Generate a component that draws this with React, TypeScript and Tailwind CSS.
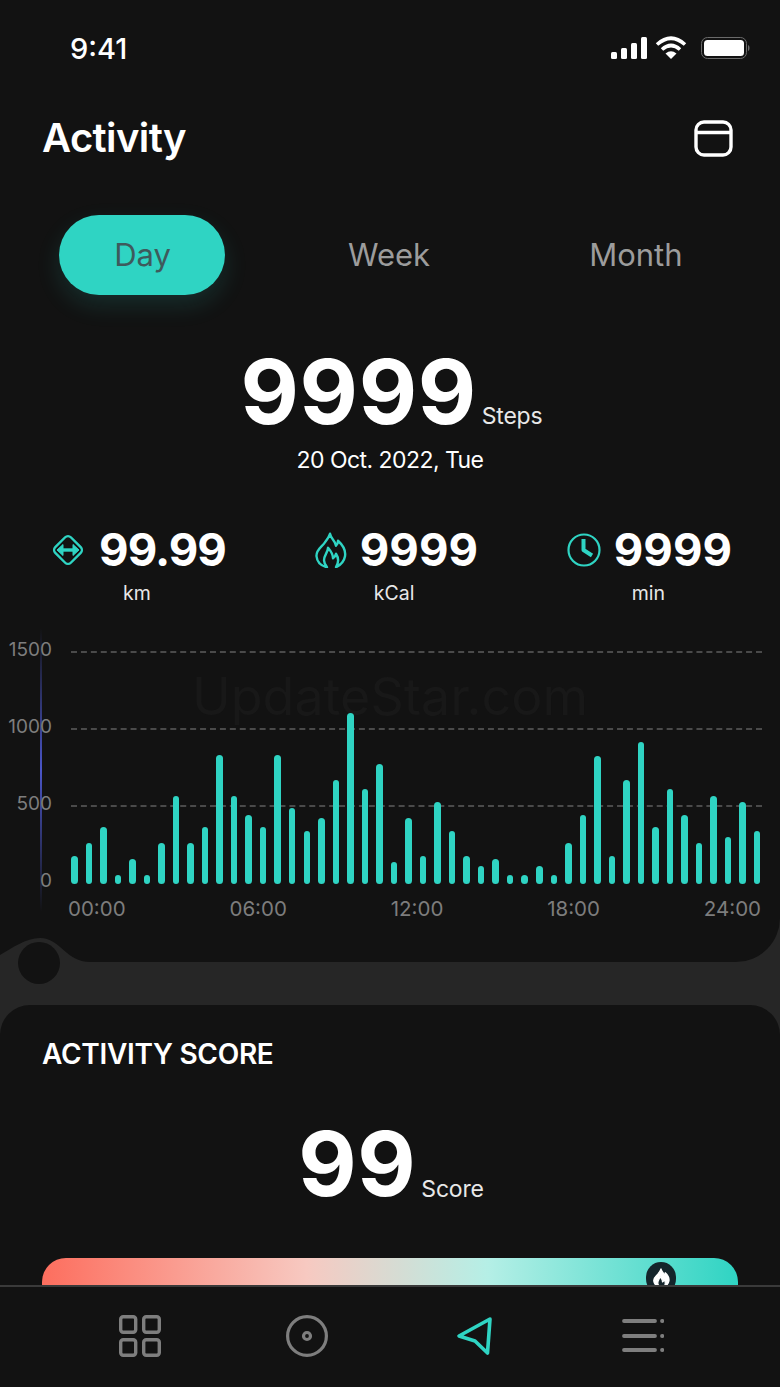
const TEAL = "#2fd4c3";

const BARS = [
  28, 41, 57, 9, 25, 9, 41, 88, 41, 57, 129, 88, 69, 57, 129, 76, 53, 66, 104, 171, 95, 120,
  22, 66, 28, 82, 53, 28, 18, 25, 9, 9, 18, 9, 41, 69, 128, 28, 104, 142, 57, 95, 69, 41, 88, 47, 82, 53,
];

function StatusBar() {
  return (
    <div className="flex h-[96px] shrink-0 items-start justify-between pl-[70px] pr-[30px] pt-[31px]">
      <span className="text-[29px] font-medium leading-[36px] text-white">9:41</span>
      <svg width="140" height="26" viewBox="0 0 140 26" className="mt-[4px]">
        <rect x="1" y="17" width="6" height="7" rx="1.5" fill="#fff" />
        <rect x="11" y="13" width="6" height="11" rx="1.5" fill="#fff" />
        <rect x="21" y="8" width="6" height="16" rx="1.5" fill="#fff" />
        <rect x="31" y="2" width="6" height="22" rx="1.5" fill="#fff" />
        <path d="M47 9.5 Q61 -3 75 9.5" stroke="#fff" strokeWidth="3.6" fill="none" />
        <path d="M52 14.5 Q61 6.5 70 14.5" stroke="#fff" strokeWidth="3.6" fill="none" />
        <path d="M55.5 18.5 Q61 14 66.5 18.5 L61 24 Z" fill="#fff" />
        <rect x="91.5" y="2.5" width="45" height="21" rx="6" stroke="#6b6b6b" fill="none" />
        <rect x="94" y="5" width="40" height="16" rx="3.5" fill="#fff" />
        <path d="M138 10 C140 10.5 140 15.5 138 16 Z" fill="#6b6b6b" />
      </svg>
    </div>
  );
}

function Header() {
  return (
    <div className="flex h-[84px] shrink-0 items-center justify-between pl-[42px] pr-[47px]">
      <h1 className="text-[40px] font-semibold leading-[48px] tracking-[-0.6px] text-white">Activity</h1>
      <svg width="39" height="37" viewBox="0 0 39 37" fill="none" stroke="#fff" strokeWidth="3.4">
        <rect x="2" y="2" width="35" height="33" rx="8" />
        <path d="M2 12.5 H37" />
      </svg>
    </div>
  );
}

function Tabs() {
  return (
    <div className="mt-[35px] flex h-[80px] shrink-0 items-center pl-[59px]">
      <div className="flex h-[80px] w-[166px] items-center justify-center rounded-[40px] bg-[#2fd4c3] pl-[1px] text-[31px] font-normal text-[#3e5a5c] shadow-[0_10px_24px_rgba(47,212,195,0.14)]">
        Day
      </div>
      <div className="ml-[123px] text-[31px] text-[#9c9c9c]">Week</div>
      <div className="ml-[159px] text-[31px] text-[#9c9c9c]">Month</div>
    </div>
  );
}

function Hero() {
  return (
    <div className="flex h-[230px] shrink-0 flex-col items-center pt-[51px]">
      <div className="flex items-end pl-[3px]">
        <span className="text-[90px] font-bold leading-[92px] tracking-[0.6px] text-white">9999</span>
        <span className="mb-[7px] ml-[5px] text-[23px] leading-[30px] tracking-[-0.2px] text-[#e8e8e8]">Steps</span>
      </div>
      <div className="mt-[7px] text-[23px] leading-[30px] tracking-[-0.55px] text-white">20 Oct. 2022, Tue</div>
    </div>
  );
}

function DistanceIcon() {
  return (
    <svg width="36" height="36" viewBox="0 0 36 36" fill="none" stroke={TEAL}>
      <rect x="7" y="7" width="22" height="22" rx="4" strokeWidth="2.4" transform="rotate(45 18 18)" />
      <path d="M11 18 H25" strokeWidth="3.4" />
      <path d="M7 18 L13 12.5 V23.5 Z M29 18 L23 12.5 V23.5 Z" fill={TEAL} strokeWidth="1" strokeLinejoin="round" />
    </svg>
  );
}

function FlameIcon({ color = TEAL, size = 32, filled = false }: { color?: string; size?: number; filled?: boolean }) {
  return (
    <svg width={size} height={size * 1.14} viewBox="0 0 32 36" fill={filled ? color : "none"} stroke={color} strokeWidth="2.4" strokeLinejoin="round">
      <path d="M15 1.5 C16 7 20 7.5 21 13.5 C22.5 12 23 10.5 23 8.5 C28 13 31 18 30 24 C29 30 25 33 21 35 C24 30 24 26 21 21.5 C20.5 24 19.5 25 18 26 C18 21 15.5 18.5 13 15.5 C13 20 9 23 9 28 C9 31 10.5 33 12 35 C6 33.5 2 29.5 1.5 24 C1 17 8 14 10 10 C12 7.5 14 5 15 1.5 Z" />
    </svg>
  );
}

function ClockIcon() {
  return (
    <svg width="34" height="34" viewBox="0 0 34 34" fill="none" stroke={TEAL}>
      <circle cx="17" cy="17" r="15.5" strokeWidth="2.2" />
      <path d="M16.5 6 V17 L25 22.5" strokeWidth="4" strokeLinejoin="round" />
    </svg>
  );
}

function Stat({ icon, value, unit, valueClass, unitClass }: { icon: React.ReactNode; value: string; unit: string; valueClass: string; unitClass: string }) {
  return (
    <div className="flex flex-col">
      <div className="flex h-[50px] items-center gap-[13px]">
        {icon}
        <span className={`text-[45.5px] font-bold leading-[50px] text-white ${valueClass}`}>{value}</span>
      </div>
      <div className={`mt-[4px] text-[19.5px] leading-[28px] text-[#e8e8e8] ${unitClass}`}>{unit}</div>
    </div>
  );
}

function Stats() {
  return (
    <div className="flex h-[109px] shrink-0 items-start justify-between pl-[50px] pr-[48px]">
      <Stat icon={<DistanceIcon />} value="99.99" unit="km" valueClass="tracking-[-0.9px]" unitClass="pl-[73px]" />
      <Stat icon={<FlameIcon />} value="9999" unit="kCal" valueClass="" unitClass="pl-[59px]" />
      <Stat icon={<ClockIcon />} value="9999" unit="min" valueClass="" unitClass="pl-[65px]" />
    </div>
  );
}

function GridRow({ label }: { label: string }) {
  return (
    <div className="flex h-[77px] items-start">
      <span className="mt-[1px] w-[52px] text-right text-[19px] leading-[24px] text-[#7d7d7d]">{label}</span>
      <div className="ml-[19px] mt-[14px] w-[691px] border-t-2 border-dashed border-[#4a4a4a]" />
    </div>
  );
}

function Chart() {
  return (
    <div className="relative h-[328px] shrink-0">
      <div className="absolute left-[40px] top-[-6px] h-[284px] w-[2px] bg-gradient-to-b from-[#12121200] via-[#4a55c8] to-[#12121200]" />
      <div className="absolute left-0 right-0 top-[30px] text-center text-[52px] leading-[66px] text-[#181818]">UpdateStar.com</div>
      <div className="relative pt-[3px]">
        <GridRow label="1500" />
        <GridRow label="1000" />
        <GridRow label="500" />
        <div className="flex h-[24px] items-start">
          <span className="mt-[1px] w-[52px] text-right text-[19px] leading-[24px] text-[#7d7d7d]">0</span>
        </div>
      </div>
      <div className="absolute left-[71px] top-[56px] flex h-[194px] w-[690px] items-end justify-between">
        {BARS.map((h, i) => (
          <div key={i} className="w-[6.5px] rounded-full bg-[#2fd4c3]" style={{ height: h }} />
        ))}
      </div>
      <div className="absolute left-[68px] top-[250px] flex w-[693px] justify-between pt-[11px] text-[20.5px] leading-[28px] text-[#7d7d7d]">
        <span>00:00</span>
        <span>06:00</span>
        <span>12:00</span>
        <span>18:00</span>
        <span>24:00</span>
      </div>
    </div>
  );
}

function Divider() {
  return (
    <div className="relative h-[43px] shrink-0 bg-[#262626]">
      <svg width="90" height="50" viewBox="0 0 90 50" className="absolute left-0 top-[-24px]">
        <path d="M0 17 C12 10 26 0 40 0 C60 0 66 24 90 24 L90 50 L0 50 Z" fill="#262626" />
        <circle cx="39" cy="25" r="21" fill="#121212" />
      </svg>
    </div>
  );
}

function Score() {
  return (
    <div className="flex-1 rounded-t-[30px] bg-[#121212] px-[42px] pt-[32px]">
      <div className="text-[28px] font-semibold leading-[34px] tracking-[-0.3px] text-white">ACTIVITY SCORE</div>
      <div className="mt-[47px] flex items-end justify-center pl-[2px]">
        <span className="text-[90px] font-bold leading-[92px] tracking-[0.6px] text-white">99</span>
        <span className="mb-[6px] ml-[5px] text-[23px] leading-[30px] tracking-[-0.2px] text-[#e8e8e8]">Score</span>
      </div>
      <div className="relative mt-[48px] h-[60px] rounded-[24px] bg-[linear-gradient(90deg,#fd6e5e_0%,#f7c9c1_38%,#b5efe6_64%,#2fd4c3_100%)]">
        <div className="absolute left-[604px] top-[4px] flex h-[32px] w-[30px] items-center justify-center rounded-full bg-[#14252b]">
          <FlameIcon color="#fff" size={17} filled />
        </div>
      </div>
    </div>
  );
}

function BottomNav() {
  const grey = "#7e7e7e";
  return (
    <div className="flex h-[102px] shrink-0 items-start border-t-2 border-[#3a3a3a] bg-[#121212] pl-[119px] pt-[28px]">
      <svg width="42" height="42" viewBox="0 0 42 42" fill="none" stroke={grey} strokeWidth="3.4">
        <rect x="1.7" y="1.7" width="15" height="15.5" rx="2.5" />
        <rect x="24.7" y="1.7" width="15.6" height="15.5" rx="2.5" />
        <rect x="1.7" y="24.7" width="15" height="15.6" rx="2.5" />
        <rect x="24.7" y="24.7" width="15.6" height="15.6" rx="2.5" />
      </svg>
      <svg width="42" height="42" viewBox="0 0 42 42" fill="none" stroke={grey} className="ml-[125px]">
        <circle cx="21" cy="21" r="19.4" strokeWidth="3.2" />
        <circle cx="21" cy="21" r="3.5" strokeWidth="3.2" />
      </svg>
      <svg width="40" height="42" viewBox="0 0 40 42" fill="none" stroke={TEAL} strokeWidth="3.6" strokeLinejoin="round" className="ml-[127px]">
        <path d="M35 4 L4 21 L20 26 L32.5 38 Z" />
      </svg>
      <svg width="44" height="36" viewBox="0 0 44 36" fill="none" stroke={grey} strokeWidth="3.8" strokeLinecap="round" className="ml-[125px] mt-[4px]">
        <path d="M4 2 H35 M4 17 H35 M4 31 H35" />
        <path d="M42 2 H42.5 M42 17 H42.5 M42 31 H42.5" />
      </svg>
    </div>
  );
}

export default function App() {
  return (
    <div className="flex h-[1387px] w-[780px] flex-col overflow-hidden bg-[#121212] font-['Inter',sans-serif]">
      <div className="flex min-h-0 flex-1 flex-col overflow-hidden bg-[#262626]">
        <div className="shrink-0 rounded-br-[44px] bg-[#121212]">
          <StatusBar />
          <Header />
          <Tabs />
          <Hero />
          <Stats />
          <Chart />
        </div>
        <Divider />
        <Score />
      </div>
      <BottomNav />
    </div>
  );
}
